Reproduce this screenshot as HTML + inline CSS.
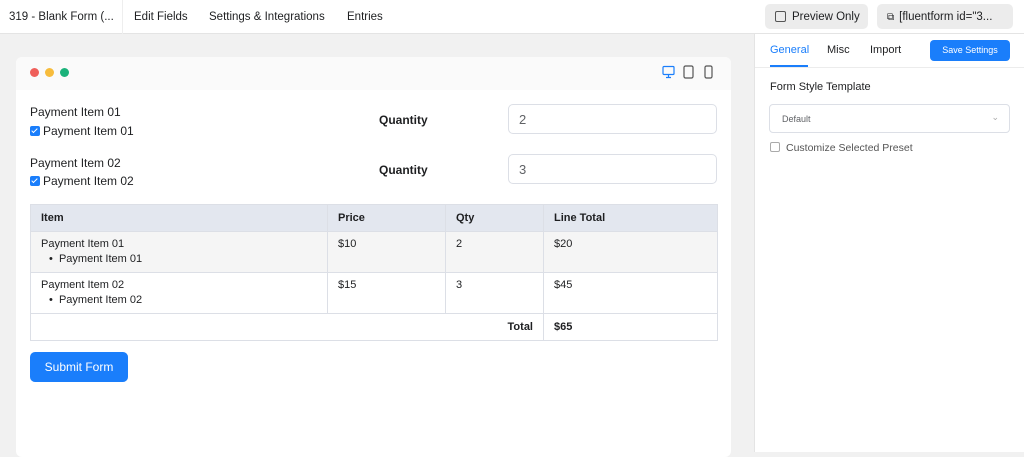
<!DOCTYPE html><html><head><style>
*{box-sizing:border-box;margin:0;padding:0}
body{width:1024px;height:452px;overflow:hidden;background:#f1f1f1;font-family:"Liberation Sans",sans-serif;color:#1e1f21;position:relative;font-size:13px}
.top{position:absolute;left:0;top:0;width:1024px;height:34px;background:#fff;border-bottom:1px solid #e4e4e4}
.top .t{position:absolute;top:11px;font-size:11.5px}
.btn{position:absolute;top:4px;height:25px;background:#ececec;border-radius:5px;font-size:11.5px;padding:7px 10px;white-space:nowrap}
.card{position:absolute;left:16px;top:57px;width:715px;height:400px;background:#fff;border-radius:6px}
.ch{height:33px;background:#fafafa;border-radius:6px 6px 0 0;position:relative}
.dot{position:absolute;top:11px;width:9px;height:9px;border-radius:50%}
.abs{position:absolute}
.inp{position:absolute;left:508px;width:209px;height:30px;border:1px solid #dcdfe6;border-radius:5px;background:#fff;padding:7px 10px;color:#606266}
.cb{display:inline-block;width:10px;height:10px;background:#1a7efb;border-radius:2px;vertical-align:-1px;margin-right:3px;position:relative}
.cb:after{content:"";position:absolute;left:3px;top:1px;width:2px;height:5px;border:solid #fff;border-width:0 1.5px 1.5px 0;transform:rotate(45deg)}
table{position:absolute;left:30px;top:204px;width:688px;border-collapse:collapse;font-size:11px;line-height:15px}
td,th{border:1px solid #dcdfe6;text-align:left;vertical-align:top;padding:5px 10px}
th{background:#e3e7ef;font-weight:bold;padding:6px 10px 5px}
.side{position:absolute;left:754px;top:34px;width:270px;height:418px;background:#fff;border-left:1px solid #e4e4e4}
</style></head><body>
<div class="top">
<span class="t" style="left:9px">319 - Blank Form (...</span>
<div class="abs" style="left:122px;top:0;width:1px;height:34px;background:#eee"></div>
<span class="t" style="left:134px">Edit Fields</span>
<span class="t" style="left:209px">Settings &amp; Integrations</span>
<span class="t" style="left:347px">Entries</span>
<div class="btn" style="left:765px;width:103px"><span style="display:inline-block;width:11px;height:11px;border:1px solid #555;border-radius:2px;vertical-align:-2px;margin-right:6px"></span>Preview Only</div>
<div class="btn" style="left:877px;width:136px"><span style="font-size:10px;margin-right:5px">⧉</span>[fluentform id="3...</div>
</div>
<div class="card">
<div class="ch">
<div class="dot" style="left:14px;background:#ef5f5a"></div>
<div class="dot" style="left:29px;background:#f7bc3c"></div>
<div class="dot" style="left:44px;background:#1bb27a"></div>
<svg class="abs" style="left:646px;top:8px" width="52" height="14" viewBox="0 0 52 14" fill="none" stroke-width="1.2"><rect x="1" y="1.5" width="11" height="8" rx="1" stroke="#1a7efb"/><path d="M6.5 9.5v3M4 12.5h5" stroke="#1a7efb"/><rect x="22" y="1" width="9" height="12" rx="1.5" stroke="#555"/><rect x="43" y="1" width="7" height="12" rx="1.5" stroke="#555"/></svg>
</div>
</div>
<div class="abs" style="left:30px;top:105px;font-size:12px">Payment Item 01</div>
<div class="abs" style="left:30px;top:124px;font-size:12px"><span class="cb"></span>Payment Item 01</div>
<div class="abs" style="left:379px;top:113px;font-size:12px;font-weight:bold">Quantity</div>
<div class="inp" style="top:104px">2</div>
<div class="abs" style="left:30px;top:156px;font-size:12px">Payment Item 02</div>
<div class="abs" style="left:30px;top:174px;font-size:12px"><span class="cb"></span>Payment Item 02</div>
<div class="abs" style="left:379px;top:163px;font-size:12px;font-weight:bold">Quantity</div>
<div class="inp" style="top:154px">3</div>
<table>
<tr><th style="width:297px">Item</th><th style="width:118px">Price</th><th style="width:98px">Qty</th><th>Line Total</th></tr>
<tr style="background:#f5f5f5"><td>Payment Item 01<br><span style="padding-left:8px">•&nbsp; Payment Item 01</span></td><td>$10</td><td>2</td><td>$20</td></tr>
<tr><td>Payment Item 02<br><span style="padding-left:8px">•&nbsp; Payment Item 02</span></td><td>$15</td><td>3</td><td>$45</td></tr>
<tr><td colspan="3" style="text-align:right;font-weight:bold;padding:6px 10px 5px">Total</td><td style="font-weight:bold;padding:6px 10px 5px">$65</td></tr>
</table>
<div class="abs" style="left:30px;top:352px;width:98px;height:30px;background:#1a7efb;border-radius:5px;color:#fff;font-size:12px;text-align:center;line-height:30px">Submit Form</div>
<div class="side">
<div class="abs" style="left:15px;top:10px;font-size:11px;color:#1a7efb">General</div>
<div class="abs" style="left:15px;top:31px;width:38px;height:2px;background:#1a7efb"></div>
<div class="abs" style="left:72px;top:10px;font-size:11px">Misc</div>
<div class="abs" style="left:115px;top:10px;font-size:11px">Import</div>
<div class="abs" style="left:175px;top:6px;width:80px;height:21px;background:#1a7efb;border-radius:4px;color:#fff;font-size:9px;text-align:center;line-height:21px">Save Settings</div>
<div class="abs" style="left:0;top:33px;width:270px;height:1px;background:#ececec"></div>
<div class="abs" style="left:15px;top:47px;font-size:11px">Form Style Template</div>
<div class="abs" style="left:14px;top:70px;width:241px;height:29px;border:1px solid #dcdfe6;border-radius:4px;font-size:9px;color:#606266;padding:9px 12px">Default<span style="position:absolute;right:10px;top:7px;color:#aaa">⌄</span></div>
<div class="abs" style="left:15px;top:108px;font-size:10.5px;color:#555"><span style="display:inline-block;width:10px;height:10px;border:1px solid #aaa;border-radius:2px;vertical-align:-1px;margin-right:6px"></span>Customize Selected Preset</div>
</div>
</body></html>
